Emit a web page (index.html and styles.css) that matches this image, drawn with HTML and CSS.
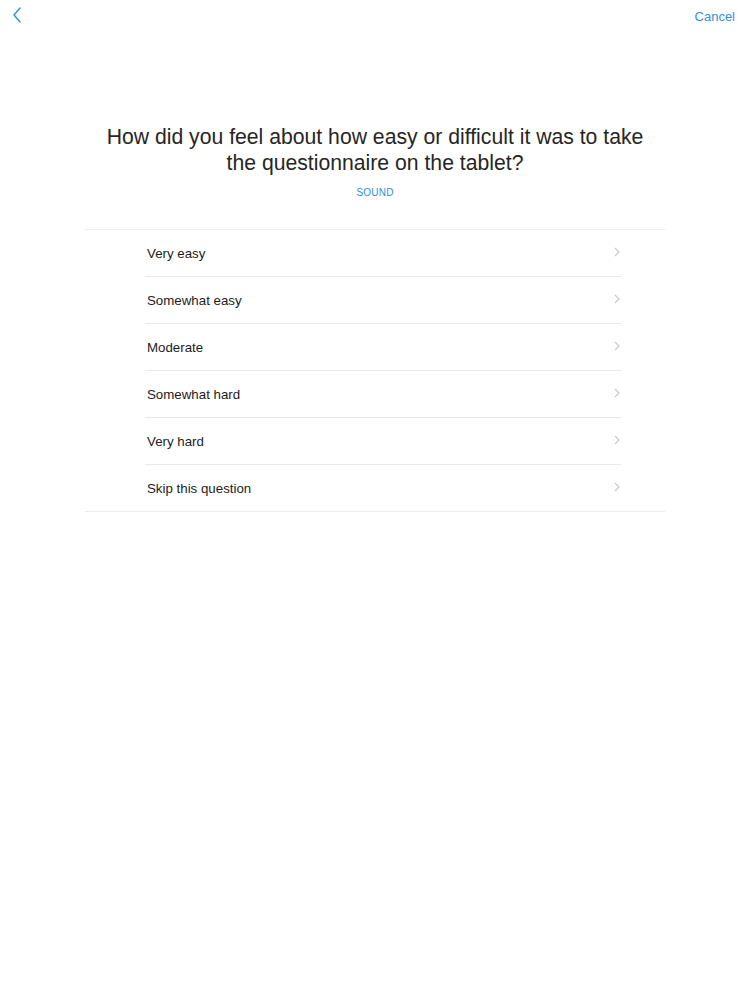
FILE: index.html
```html
<!DOCTYPE html>
<html>
<head>
<meta charset="utf-8">
<link rel="stylesheet" href="styles.css">
</head>
<body>
<div class="nav">
  <svg class="back" width="12" height="18" viewBox="0 0 12 18"><path d="M9 2 L3 9 L9 16" fill="none" stroke="#2f8fdc" stroke-width="1.4" stroke-linecap="round" stroke-linejoin="round"/></svg>
  <span class="cancel">Cancel</span>
</div>
<div class="header">
  <h1 class="title">How did you feel about how easy or difficult it was to take<br>the questionnaire on the tablet?</h1>
  <div class="sound">SOUND</div>
</div>
<div class="list">
  <div class="row"><span>Very easy</span><svg class="chev" width="6" height="10" viewBox="0 0 6 10"><path d="M1 1 L5 5 L1 9" fill="none" stroke="#c7c7cc" stroke-width="1.1"/></svg></div>
  <div class="row"><span>Somewhat easy</span><svg class="chev" width="6" height="10" viewBox="0 0 6 10"><path d="M1 1 L5 5 L1 9" fill="none" stroke="#c7c7cc" stroke-width="1.1"/></svg></div>
  <div class="row"><span>Moderate</span><svg class="chev" width="6" height="10" viewBox="0 0 6 10"><path d="M1 1 L5 5 L1 9" fill="none" stroke="#c7c7cc" stroke-width="1.1"/></svg></div>
  <div class="row"><span>Somewhat hard</span><svg class="chev" width="6" height="10" viewBox="0 0 6 10"><path d="M1 1 L5 5 L1 9" fill="none" stroke="#c7c7cc" stroke-width="1.1"/></svg></div>
  <div class="row"><span>Very hard</span><svg class="chev" width="6" height="10" viewBox="0 0 6 10"><path d="M1 1 L5 5 L1 9" fill="none" stroke="#c7c7cc" stroke-width="1.1"/></svg></div>
  <div class="row last"><span>Skip this question</span><svg class="chev" width="6" height="10" viewBox="0 0 6 10"><path d="M1 1 L5 5 L1 9" fill="none" stroke="#c7c7cc" stroke-width="1.1"/></svg></div>
</div>
</body>
</html>
```
FILE: styles.css
```css
html, body {
  margin: 0;
  padding: 0;
  background: #ffffff;
  font-family: "Liberation Sans", Arial, sans-serif;
  color: #111111;
}
.nav {
  height: 32px;
  display: flex;
  justify-content: space-between;
  align-items: center;
  padding: 0 15px 0 11px;
}
.back {
  display: block;
  margin-top: -2px;
}
.cancel {
  color: #2f8fdc;
  font-size: 13px;
}
.header {
  padding-top: 92px;
  text-align: center;
}
.title {
  margin: 0;
  font-weight: normal;
  font-size: 21.2px;
  line-height: 26px;
  color: #262626;
}
.sound {
  margin-top: 11px;
  font-size: 10px;
  color: #2f8fdc;
  letter-spacing: 0.2px;
}
.list {
  margin: 31px 85px 0 85px;
  border-top: 1px solid #ececec;
  border-bottom: 1px solid #ececec;
}
.row {
  margin: 0 44px 0 60px;
  height: 46px;
  display: flex;
  align-items: center;
  justify-content: space-between;
  border-bottom: 1px solid #e9e9e9;
  font-size: 13.3px;
  color: #1c1c1c;
  padding-left: 2px;
  padding-right: 1px;
}
.row.last {
  border-bottom: none;
}
.chev {
  display: block;
  margin-top: -2px;
}
```
